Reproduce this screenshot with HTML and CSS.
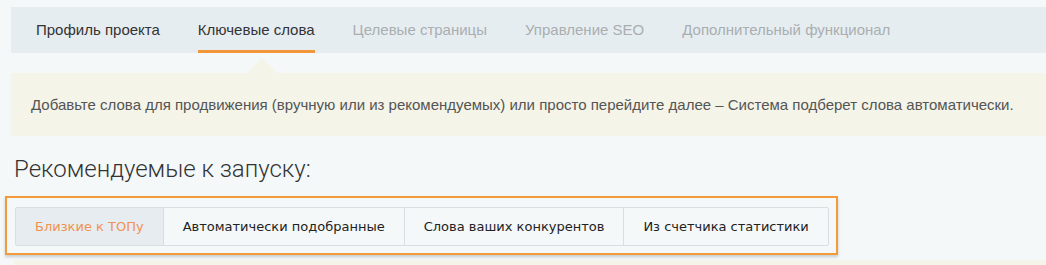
FILE: index.html
```html
<!DOCTYPE html>
<html lang="ru">
<head>
<meta charset="utf-8">
<link rel="stylesheet" href="styles.css">
</head>
<body>
<nav class="steps">
  <span class="step done">Профиль проекта</span>
  <span class="step active">Ключевые слова</span>
  <span class="step">Целевые страницы</span>
  <span class="step">Управление SEO</span>
  <span class="step">Дополнительный функционал</span>
</nav>
<div class="notice">
  Добавьте слова для продвижения (вручную или из рекомендуемых) или просто перейдите далее – Система подберет слова автоматически.
</div>
<h2 class="title">Рекомендуемые к запуску:</h2>
<div class="highlight">
  <div class="tabs">
    <span class="tab current">Близкие к ТОПу</span>
    <span class="tab">Автоматически подобранные</span>
    <span class="tab">Слова ваших конкурентов</span>
    <span class="tab">Из счетчика статистики</span>
  </div>
</div>
<div class="strip"></div>
</body>
</html>
```
FILE: styles.css
```css
html, body {
  margin: 0;
  padding: 0;
}
body {
  background: #f4f8f9;
  font-family: "Liberation Sans", Arial, sans-serif;
  color: #333;
  overflow: hidden;
  height: 265px;
}
.steps {
  margin: 7px 0 0 11px;
  height: 46px;
  background: #e6edf1;
  display: flex;
  padding-left: 25px;
  gap: 38px;
  font-size: 15px;
}
.step {
  display: flex;
  align-items: center;
  box-sizing: border-box;
  height: 100%;
  padding-top: 1px;
  border-bottom: 3px solid transparent;
  color: #aaaeb0;
}
.step.done, .step.active {
  color: #333;
}
.step.active {
  border-bottom-color: #f39539;
}
.notice {
  position: relative;
  margin: 20px 0 0 11px;
  height: 63px;
  box-sizing: border-box;
  padding-left: 20px;
  background: #f4f4e8;
  color: #555;
  font-size: 15px;
  display: flex;
  align-items: center;
}
.notice::before {
  content: "";
  position: absolute;
  left: 236px;
  top: -15px;
  border-left: 15px solid transparent;
  border-right: 15px solid transparent;
  border-bottom: 15px solid #f4f4e8;
}
.title {
  margin: 18px 0 0 14px;
  font-family: Roboto, sans-serif;
  font-weight: 300;
  font-size: 24px;
  line-height: 31px;
  color: #333;
}
.highlight {
  margin: 11px 0 0 5px;
  width: fit-content;
  border: 2px solid #f39a3b;
  padding: 9px 7px 7px 8px;
  box-shadow: 0 2px 3px rgba(0,0,0,0.18);
}
.tabs {
  display: flex;
  border: 1px solid #d9dee1;
  border-radius: 2px;
  height: 39px;
  box-sizing: border-box;
}
.tab {
  display: flex;
  align-items: center;
  padding: 0 19px;
  font-family: "DejaVu Sans", Verdana, sans-serif;
  font-size: 13px;
  color: #222;
  border-left: 1px solid #d9dee1;
}
.tab:first-child {
  border-left: none;
}
.tab.current {
  background: #e6ecef;
  color: #f39250;
}
.strip {
  margin: 5px 0 0 14px;
  height: 10px;
  background: #f4f4e8;
}
```
